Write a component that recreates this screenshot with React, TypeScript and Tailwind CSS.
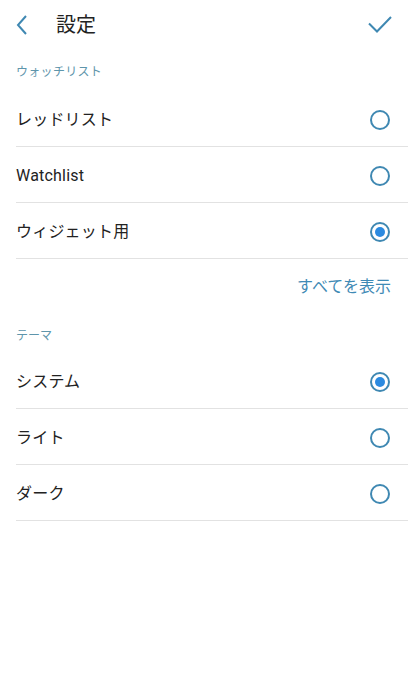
import { useState } from 'react';

const font = { fontFamily: 'Roboto, "Noto Sans CJK JP", sans-serif' };

function Radio({ checked }: { checked: boolean }) {
	return (
		<span className="w-[20px] h-[20px] rounded-full border-2 border-[#3f88b2] flex items-center justify-center">
			{checked && <span className="w-[10px] h-[10px] rounded-full bg-[#2b8ae0]" />}
		</span>
	);
}

function Row({ label, checked, onClick }: { label: string; checked: boolean; onClick: () => void }) {
	return (
		<button
			onClick={onClick}
			className="w-full h-[56px] flex items-center justify-between pt-[2px] pr-[18px] border-b border-[#e2e2e2] text-left"
		>
			<span className="text-[16px] text-[#222222] tracking-[0.2px]">{label}</span>
			<Radio checked={checked} />
		</button>
	);
}

export default function App() {
	const [list, setList] = useState(2);
	const [theme, setTheme] = useState(0);

	const lists = ['レッドリスト', 'Watchlist', 'ウィジェット用'];
	const themes = ['システム', 'ライト', 'ダーク'];

	return (
		<div className="w-[408px] h-[694px] bg-white" style={font}>
			{/* header */}
			<header className="h-[46px] flex items-center pt-[4px] px-[16px]">
				<svg width="12" height="20" viewBox="0 0 12 20" fill="none" stroke="#3f88b2" strokeWidth="2">
					<polyline points="10,1 2,10 10,19" />
				</svg>
				<h1 className="ml-[28px] text-[20px] text-[#222222]">設定</h1>
				<svg className="ml-auto" width="24" height="18" viewBox="0 0 24 18" fill="none" stroke="#3f88b2" strokeWidth="2">
					<polyline points="1,7.5 9,15.5 23,1" />
				</svg>
			</header>

			<div className="h-[45px] flex items-end pb-[11px] pl-[16px]">
				<span className="text-[12px] leading-[16px] text-[#5e95ab] tracking-[0.3px]">ウォッチリスト</span>
			</div>

			<div className="pl-[16px]">
				{lists.map((l, i) => (
					<Row key={l} label={l} checked={list === i} onClick={() => setList(i)} />
				))}
			</div>

			<div className="h-[55px] flex items-center justify-end pr-[17px]">
				<span className="text-[16px] text-[#3f8ab5]">すべてを表示</span>
			</div>

			<div className="h-[39px] pt-[9px] pl-[16px]">
				<span className="text-[12px] leading-[16px] text-[#5e95ab]">テーマ</span>
			</div>

			<div className="pl-[16px]">
				{themes.map((t, i) => (
					<Row key={t} label={t} checked={theme === i} onClick={() => setTheme(i)} />
				))}
			</div>
		</div>
	);
}
